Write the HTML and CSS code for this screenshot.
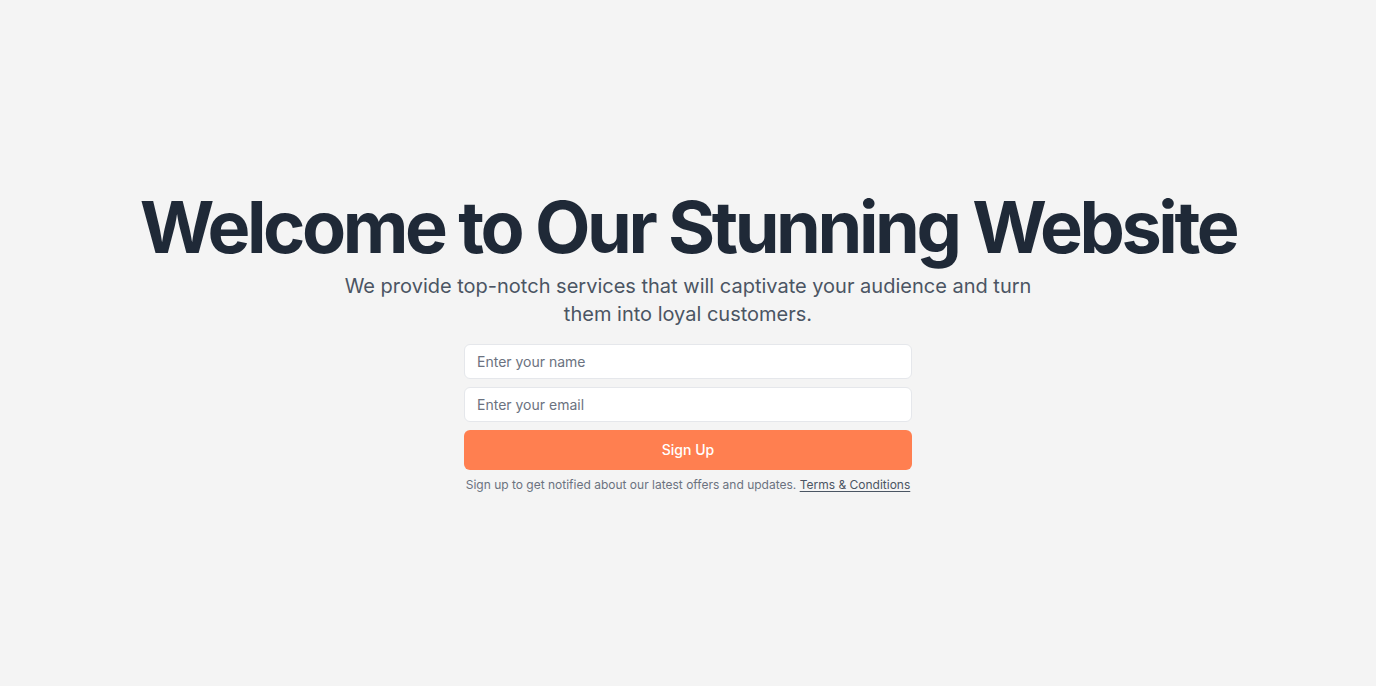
FILE: index.html
```html
<!DOCTYPE html>
<html lang="en">
<head>
<meta charset="utf-8">
<title>Welcome</title>
<link rel="stylesheet" href="styles.css">
</head>
<body>
<main class="hero">
  <h1 class="title">Welcome to Our Stunning Website</h1>
  <p class="lead">We provide top-notch services that will captivate your audience and turn them into loyal customers.</p>
  <form class="signup">
    <input class="field" type="text" placeholder="Enter your name">
    <input class="field" type="email" placeholder="Enter your email">
    <button class="btn" type="button">Sign Up</button>
    <p class="note">Sign up to get notified about our latest offers and updates. <a class="link" href="#">Terms &amp; Conditions</a></p>
  </form>
</main>
</body>
</html>
```

FILE: styles.css
```css
* { box-sizing: border-box; }
html, body { margin: 0; height: 100%; }
body {
  background: #f4f4f4;
  font-family: Inter, "Noto Sans", sans-serif;
}
.hero {
  min-height: 100vh;
  display: flex;
  flex-direction: column;
  align-items: center;
  justify-content: center;
  text-align: center;
  padding: 0 16px 4px;
}
.title {
  margin: 0;
  font-size: 72px;
  line-height: 1;
  font-weight: 700;
  letter-spacing: -3.4px;
  color: #1f2937;
}
.lead {
  margin: 9px 0 0;
  max-width: 700px;
  font-size: 20px;
  line-height: 28px;
  color: #4b5563;
}
.signup {
  margin-top: 16px;
  width: 448px;
  display: flex;
  flex-direction: column;
  gap: 8px;
}
.field {
  height: 35px;
  padding: 0 12px;
  border: 1px solid #e5e7eb;
  border-radius: 6px;
  background: #fff;
  font-family: inherit;
  font-size: 14px;
  color: #111827;
}
.field::placeholder { color: #6b7280; }
.btn {
  height: 40px;
  border: 0;
  border-radius: 6px;
  background: #ff7f50;
  color: #fff;
  font-family: inherit;
  font-size: 14px;
  font-weight: 500;
}
.note {
  margin: 0;
  font-size: 12px;
  line-height: 14px;
  color: #6b7280;
}
.link {
  color: #4b5563;
  text-decoration: underline;
  text-underline-offset: 2px;
}
```
